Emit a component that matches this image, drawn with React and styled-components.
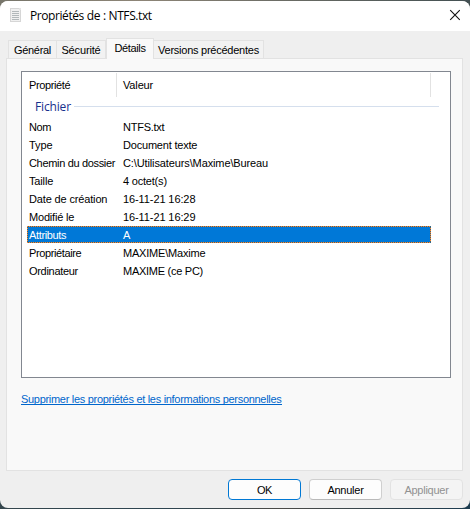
import React from 'react';
import styled, { createGlobalStyle } from 'styled-components';

const GlobalStyle = createGlobalStyle`
  * { box-sizing: border-box; }
  body { margin: 0; background: #3d484c; overflow: hidden; }
`;

const Desktop = styled.div`
  width: 470px;
  height: 509px;
  padding: 1px 0;
  background: linear-gradient(90deg, #77756a 0, #8d8577 30%, #6b6c65 60%, #435052 100%) top / 100% 12px no-repeat,
    linear-gradient(90deg, #35464d 0, #2d4450 35%, #4b4b48 60%, #1c3c50 100%);
`;

const Dialog = styled.main`
  display: flex;
  flex-direction: column;
  height: 507px;
  overflow: hidden;
  border-radius: 8px;
  background: #efefef;
  color: #000;
  font: 11px/18px "Liberation Sans", Arial, sans-serif;
`;

const TitleBar = styled.header`
  display: flex;
  align-items: center;
  height: 30px;
  flex: none;
  padding: 0 9px 2px 9px;
  background: #fff;
`;

const Title = styled.h1`
  flex: 1;
  margin: 2px 0 0 8px;
  font: 400 12px/16px "Open Sans", "Noto Sans", sans-serif;
  letter-spacing: -0.42px;
  word-spacing: 0.2px;
  white-space: nowrap;
`;

const CloseButton = styled.button`
  display: flex;
  padding: 0;
  border: 0;
  background: none;
`;

const TabList = styled.nav`
  display: flex;
  align-items: flex-end;
  height: 27px;
  flex: none;
  padding-left: 8px;
`;

const Tab = styled.button`
  flex: none;
  width: ${(p) => p.$width}px;
  height: ${(p) => (p.$active ? 20 : 18)}px;
  padding: ${(p) => (p.$active ? '0' : '1px 0 0')};
  border: 1px solid #e2e2e2;
  border-bottom: 0;
  border-left-width: ${(p) => (p.$first || p.$active ? 1 : 0)}px;
  background: ${(p) => (p.$active ? '#f9f9f9' : '#f2f2f2')};
  color: #000;
  font: inherit;
  line-height: 15px;
  letter-spacing: ${(p) => p.$track || 0}px;
  white-space: nowrap;
  ${(p) => p.$active && `
    height: 21px;
    margin-bottom: -1px;
    padding-bottom: 2px;
    z-index: 1;
  `}
`;

const Panel = styled.section`
  height: 413px;
  flex: none;
  margin: 0 7px 0 6px;
  padding: 12px 11px 0 14px;
  border: 1px solid #e2e2e2;
  background: #f9f9f9;
`;

const PropertyList = styled.div`
  height: 307px;
  border: 1px solid #828790;
  background: #fff;
`;

const ListHeader = styled.div`
  display: flex;
  height: 26px;
  padding: 1px 0 0 7px;
`;

const HeaderCell = styled.div`
  width: ${(p) => p.$width}px;
  height: 24px;
  padding-left: ${(p) => p.$inset}px;
  border-right: 1px solid #e2e2e2;
  line-height: 24px;
  letter-spacing: ${(p) => p.$track || 0}px;
`;

const GroupHeading = styled.h2`
  display: flex;
  align-items: center;
  gap: 3px;
  height: 17px;
  margin: 0 11px 0 13px;
  color: #18308d;
  font: 400 12px/17px "Open Sans", "Noto Sans", sans-serif;
  letter-spacing: -0.15px;

  &::after {
    content: '';
    flex: 1;
    height: 1px;
    background: #d5dfed;
  }
`;

const Rows = styled.div`
  padding: 3px 19px 0 5px;
`;

const Row = styled.div`
  display: grid;
  grid-template-columns: 94px 1fr;
  height: 18px;
  padding-left: 2px;
  color: ${(p) => (p.$selected ? '#fff' : '#000')};
  white-space: nowrap;
  ${(p) => p.$selected && `
    height: 17px;
    margin-bottom: 1px;
    line-height: 18px;
    background:
      repeating-linear-gradient(90deg, #ff8728 0 1px, #38647d 1px 2px) top / 100% 1px no-repeat,
      repeating-linear-gradient(90deg, #ff8728 0 1px, #38647d 1px 2px) bottom / 100% 1px no-repeat,
      repeating-linear-gradient(#ff8728 0 1px, #38647d 1px 2px) left / 1px 100% no-repeat,
      repeating-linear-gradient(#ff8728 0 1px, #38647d 1px 2px) right / 1px 100% no-repeat,
      #0078d7;
  `}
`;

const Cell = styled.span`
  letter-spacing: ${(p) => p.$track || 0}px;
`;

const PrivacyLink = styled.a`
  display: block;
  width: 261px;
  height: 12px;
  margin-top: 15px;
  border-bottom: 1px solid #0066cc;
  color: #0066cc;
  line-height: 13px;
  letter-spacing: ${(p) => p.$track}px;
  white-space: nowrap;
`;

const Footer = styled.footer`
  display: flex;
  justify-content: flex-end;
  gap: 8px;
  padding: 8px 7px 0 0;
`;

const Button = styled.button`
  width: 73px;
  height: 21px;
  padding: 0;
  border: 1px solid ${(p) => (p.$primary ? '#0078d4' : '#cfcfcf')};
  border-bottom-color: ${(p) => (p.$primary ? '#0078d4' : '#b9b9b9')};
  border-radius: 4px;
  background: #fdfdfd;
  color: #000;
  font: inherit;
  line-height: 21px;
  letter-spacing: ${(p) => p.$track || 0}px;

  &:disabled {
    border-color: #e2e2e2;
    background: #f4f4f4;
    color: #919191;
  }
`;

const tabs = [
  { label: 'Général', width: 49, first: true, track: -0.3 },
  { label: 'Sécurité', width: 49, track: -0.15 },
  { label: 'Détails', width: 48, active: true, track: -0.35 },
  { label: 'Versions précédentes', width: 110, track: -0.25 },
];

const properties = [
  ['Nom', 'NTFS.txt', -0.4, -0.25],
  ['Type', 'Document texte', -0.1, -0.2],
  ['Chemin du dossier', 'C:\\Utilisateurs\\Maxime\\Bureau', -0.33, -0.12],
  ['Taille', '4 octet(s)', -0.15, -0.2],
  ['Date de création', '16-11-21 16:28', -0.15, -0.1],
  ['Modifié le', '16-11-21 16:29', -0.2, -0.1],
  ['Attributs', 'A', -0.35, 0],
  ['Propriétaire', 'MAXIME\\Maxime', -0.38, -0.2],
  ['Ordinateur', 'MAXIME (ce PC)', -0.3, -0.27],
];

function FileIcon() {
  return (
    <svg width="13" height="16" viewBox="0 0 13 16" shapeRendering="crispEdges">
      <path d="M1.5 1.5h10v13h-10z" fill="#f0f0f0" stroke="#d6d6d6" />
      <path d="M10 1h2v2h-2z" fill="#e4e4e4" />
      <path d="M3 4.5h7M3 6.5h7M3 8.5h7M3 10.5h7M3 12.5h7" stroke="#b2b8ba" />
    </svg>
  );
}

export default function App() {
  return (
    <Desktop>
      <GlobalStyle />
      <Dialog>
        <TitleBar>
          <FileIcon />
          <Title>Propriétés de : NTFS.txt</Title>
          <CloseButton aria-label="Fermer">
            <svg width="12" height="12" viewBox="0 0 12 12">
              <path d="M1.2 1.2l9.6 9.6M10.8 1.2L1.2 10.8" stroke="#111" strokeWidth="1.1" />
            </svg>
          </CloseButton>
        </TitleBar>
        <TabList>
          {tabs.map((t) => (
            <Tab key={t.label} $width={t.width} $active={t.active} $first={t.first} $track={t.track}>
              {t.label}
            </Tab>
          ))}
        </TabList>
        <Panel>
          <PropertyList>
            <ListHeader>
              <HeaderCell $width={88} $inset={0} $track={-0.38}>Propriété</HeaderCell>
              <HeaderCell $width={314} $inset={6} $track={-0.15}>Valeur</HeaderCell>
            </ListHeader>
            <GroupHeading>Fichier</GroupHeading>
            <Rows>
              {properties.map(([name, value, nameTrack, valueTrack]) => (
                <Row key={name} $selected={name === 'Attributs'}>
                  <Cell $track={nameTrack}>{name}</Cell>
                  <Cell $track={valueTrack}>{value}</Cell>
                </Row>
              ))}
            </Rows>
          </PropertyList>
          <PrivacyLink $track={-0.3}>Supprimer les propriétés et les informations personnelles</PrivacyLink>
        </Panel>
        <Footer>
          <Button $primary $track={-0.5}>OK</Button>
          <Button $track={-0.25}>Annuler</Button>
          <Button disabled $track={-0.25}>Appliquer</Button>
        </Footer>
      </Dialog>
    </Desktop>
  );
}
